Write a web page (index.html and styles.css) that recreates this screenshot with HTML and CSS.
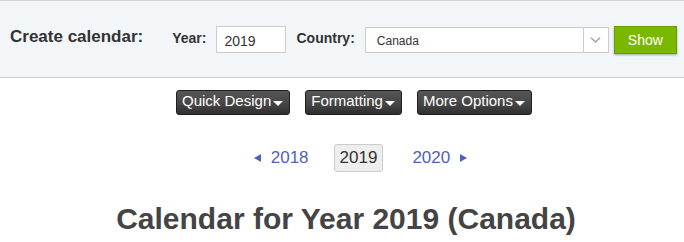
FILE: index.html
```html
<!DOCTYPE html>
<html lang="en">
<head>
  <meta charset="UTF-8">
  <title>Create Calendar</title>
  <link rel="stylesheet" href="styles.css">
</head>
<body>

  <div class="topbar">
    <span class="create-label">Create calendar:</span>
    <label class="field-label" for="year">Year:</label>
    <input type="text" id="year" class="year-input" value="2019">
    <label class="field-label country-label" for="country">Country:</label>
    <div class="select" id="country">
      <span class="select-value">Canada</span>
      <span class="select-arrow">
        <svg width="11" height="6" viewBox="0 0 11 6"><path d="M1 0.8l4.5 4.2 4.5-4.2" fill="none" stroke="#a0a0a0" stroke-width="1.4"/></svg>
      </span>
    </div>
    <button class="show-btn">Show</button>
  </div>

  <div class="options">
    <button class="opt-btn">Quick Design<span class="caret"></span></button>
    <button class="opt-btn">Formatting<span class="caret"></span></button>
    <button class="opt-btn">More Options<span class="caret"></span></button>
  </div>

  <div class="year-nav">
    <a class="year-link prev" href="#"><span class="tri-left"></span>2018</a>
    <span class="year-current">2019</span>
    <a class="year-link next" href="#">2020<span class="tri-right"></span></a>
  </div>

  <h1 class="cal-title">Calendar for Year 2019 (Canada)</h1>

</body>
</html>
```

FILE: styles.css
```css
body {
  margin: 0;
  font-family: "Liberation Sans", Arial, sans-serif;
  color: #333;
  background-color: white;
}
.topbar {
  display: flex;
  align-items: center;
  height: 76px;
  padding-left: 10px;
  background-color: #f3f6f9;
  border-top: 1px solid #d4d4d4;
  border-bottom: 1px solid #cfcfcf;
}
.create-label {
  font-size: 17px;
  font-weight: bold;
  color: #333;
  margin-right: 29px;
  margin-bottom: 5px;
}
.field-label {
  font-size: 14px;
  font-weight: bold;
  color: #333;
  margin-right: 10px;
  margin-bottom: 2px;
}
.country-label {
  margin-left: 10px;
}
.year-input {
  box-sizing: border-box;
  width: 70px;
  height: 27px;
  padding: 3px 7px 0;
  border: 1px solid #ccc;
  font-family: inherit;
  font-size: 14px;
  color: #333;
  outline: none;
}
.select {
  box-sizing: border-box;
  display: flex;
  width: 244px;
  height: 26px;
  margin-top: 1px;
  background-color: white;
  border: 1px solid #ccc;
}
.select-value {
  flex: 1;
  padding-left: 11px;
  padding-top: 2px;
  font-size: 12px;
  line-height: 22px;
  color: #333;
}
.select-arrow {
  width: 24px;
  display: flex;
  align-items: center;
  justify-content: center;
  border-left: 1px solid #ccc;
}
.show-btn {
  box-sizing: border-box;
  width: 63px;
  height: 28px;
  margin-left: 5px;
  margin-top: 1px;
  padding: 0;
  font-family: inherit;
  font-size: 14px;
  color: white;
  background-color: #7ab800;
  border: 1px solid #6a9e00;
  box-shadow: 0 1px 2px rgba(0,0,0,0.35);
  cursor: pointer;
}
.options {
  display: flex;
  justify-content: center;
  gap: 15px;
  margin-top: 12px;
  padding-left: 24px;
}
.opt-btn {
  display: flex;
  align-items: center;
  height: 25px;
  padding: 0 6px 5px 5px;
  font-family: inherit;
  font-size: 15px;
  line-height: 17px;
  color: white;
  background: linear-gradient(#575757, #424242 65%, #2e2e2e);
  border: 1px solid #1e1e1e;
  border-radius: 3px;
  cursor: pointer;
}
.caret {
  display: inline-block;
  width: 0;
  height: 0;
  margin-left: 2px;
  margin-top: 6px;
  border-left: 5.5px solid transparent;
  border-right: 5.5px solid transparent;
  border-top: 5px solid white;
}
.year-nav {
  display: flex;
  justify-content: center;
  align-items: center;
  margin-top: 29px;
  padding-left: 37px;
  font-size: 17px;
}
.year-link {
  display: flex;
  align-items: center;
  color: #5062b8;
  text-decoration: none;
}
.tri-left {
  width: 0;
  height: 0;
  margin-right: 10px;
  border-top: 4px solid transparent;
  border-bottom: 4px solid transparent;
  border-right: 7px solid #5062b8;
}
.tri-right {
  width: 0;
  height: 0;
  margin-left: 10px;
  border-top: 4px solid transparent;
  border-bottom: 4px solid transparent;
  border-left: 7px solid #5062b8;
}
.year-current {
  margin: 0 29px 0 25px;
  padding: 0 5px;
  line-height: 26px;
  color: #333;
  background-color: #eee;
  border: 1px solid #ccc;
  border-radius: 3px;
}
.cal-title {
  margin: 30px 0 0;
  padding-left: 8px;
  text-align: center;
  font-size: 30px;
  font-weight: bold;
  color: #444;
}
```
